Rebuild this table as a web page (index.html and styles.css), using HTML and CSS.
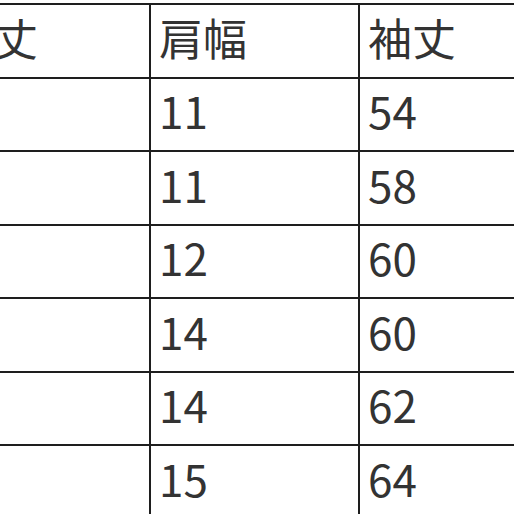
FILE: index.html
```html
<!DOCTYPE html>
<html lang="ja">
<head>
<meta charset="utf-8">
<title>サイズ表</title>
<link rel="stylesheet" href="styles.css">
</head>
<body>
<table class="size-table">
  <colgroup>
    <col class="col">
    <col class="col">
    <col class="col">
  </colgroup>
  <thead>
    <tr><th>着丈</th><th>肩幅</th><th>袖丈</th></tr>
  </thead>
  <tbody>
    <tr><td></td><td>11</td><td>54</td></tr>
    <tr><td></td><td>11</td><td>58</td></tr>
    <tr><td></td><td>12</td><td>60</td></tr>
    <tr><td></td><td>14</td><td>60</td></tr>
    <tr><td></td><td>14</td><td>62</td></tr>
    <tr><td></td><td>15</td><td>64</td></tr>
  </tbody>
</table>
</body>
</html>
```
FILE: styles.css
```css
html, body {
  margin: 0;
  padding: 0;
  background: #ffffff;
  overflow: hidden;
}
.size-table {
  width: 627px;
  margin-top: 3px;
  margin-left: -60px;
  border-collapse: collapse;
  table-layout: fixed;
  font-family: "Noto Sans CJK JP", "Noto Sans", sans-serif;
  font-size: 44px;
  color: #333333;
}
.col {
  width: 209px;
}
.size-table tr {
  height: 73.5px;
}
.size-table th,
.size-table td {
  border: 2.5px solid #1e1e1e;
  padding: 0 0 8px 8px;
  text-align: left;
  vertical-align: middle;
  font-weight: 400;
  line-height: 1;
}
```
